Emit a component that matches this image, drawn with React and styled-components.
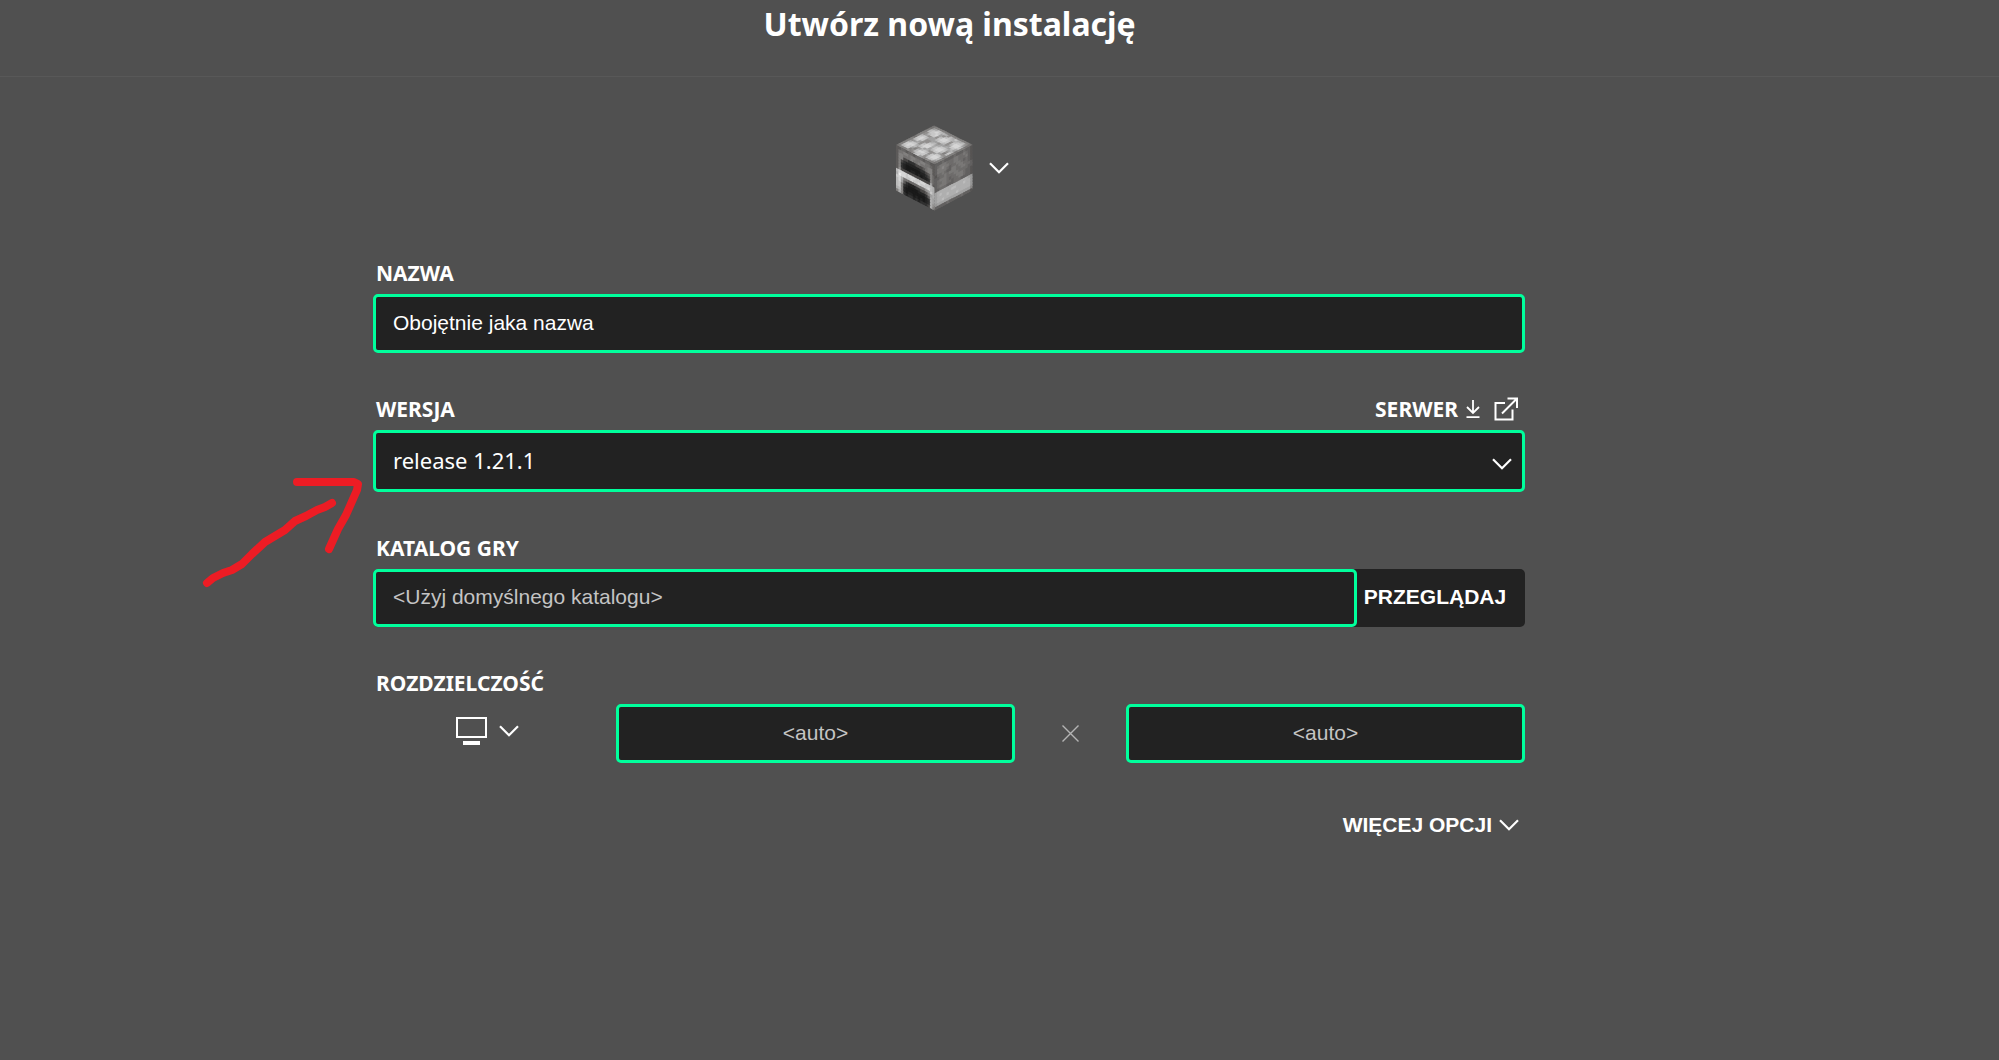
import React from "react";
import styled, { createGlobalStyle } from "styled-components";

const sans = '"Noto Sans", "Open Sans", sans-serif';
const arial = '"Liberation Sans", Arial, sans-serif';
const green = "#00ff9c";
const panel = "#222222";

const GlobalStyle = createGlobalStyle`
  *, *::before, *::after { box-sizing: border-box; }
  body {
    margin: 0;
    background: #505050;
    color: #ffffff;
    font-family: ${sans};
    font-size: 21px;
  }
  button, input, select { font: inherit; color: inherit; margin: 0; }
  button { background: none; border: 0; padding: 0; cursor: pointer; }
  svg { display: block; flex: none; }
`;

const Page = styled.div`
  position: relative;
  min-height: 100vh;
`;

const Header = styled.header`
  padding: 2px 100px 30px 0;
  border-bottom: 1px solid #585858;
  text-align: center;
`;

const Title = styled.h1`
  margin: 0;
  font-size: 32px;
  line-height: 44px;
  font-weight: 700;
`;

const Main = styled.main`
  padding: 48px 101px 48px 0;
`;

const Form = styled.form`
  max-width: 1152px;
  margin: 0 auto;
`;

const BlockButton = styled.button`
  display: flex;
  align-items: center;
  gap: 16px;
  margin: 0 auto 47px;
  padding-left: 6px;
`;

const Field = styled.div`
  margin-bottom: 41px;
`;

const LabelRow = styled.div`
  display: flex;
  justify-content: space-between;
  align-items: center;
  height: 30px;
  margin-bottom: 6px;
  padding: 0 7px 0 3px;
`;

const Label = styled.label`
  font-weight: 700;
  line-height: 30px;
`;

const Links = styled.div`
  display: flex;
  align-items: center;
  gap: 14px;
`;

const IconLink = styled.a`
  display: flex;
  align-items: center;
  gap: 8px;
  color: inherit;
  font-weight: 700;
  line-height: 30px;
  text-decoration: none;
`;

const TextInput = styled.input`
  display: block;
  flex: 1;
  width: 100%;
  min-width: 0;
  height: ${(p) => p.$height || 59}px;
  padding: 0 17px 2px;
  border: 3px solid ${green};
  border-radius: 5px;
  background: ${panel};
  font-family: ${arial};
  text-align: ${(p) => p.$align || "left"};
  outline: none;
  &::placeholder { color: #c4c4c4; opacity: 1; }
`;

const SelectBox = styled.div`
  position: relative;
`;

const Select = styled.select`
  display: block;
  width: 100%;
  height: 62px;
  padding: 0 56px 2px 17px;
  appearance: none;
  border: 3px solid ${green};
  border-radius: 5px;
  background: ${panel};
  font-size: 22px;
  outline: none;
`;

const SelectMark = styled.span`
  position: absolute;
  top: 28px;
  right: 13px;
  pointer-events: none;
`;

const Directory = styled.div`
  display: flex;
  border-radius: 5px;
  background: ${panel};
`;

const BrowseButton = styled.button`
  width: 168px;
  padding: 0 12px 2px 0;
  font-family: ${arial};
  font-weight: 700;
`;

const Resolution = styled.div`
  display: grid;
  grid-template-columns: 243px 1fr 111px 1fr;
  align-items: center;
`;

const MonitorButton = styled.button`
  display: flex;
  align-items: center;
  gap: 12px;
  padding: 0 0 6px 83px;
`;

const Times = styled.span`
  display: flex;
  justify-content: center;
`;

const MoreButton = styled.button`
  display: flex;
  align-items: center;
  gap: 7px;
  margin: 47px 6px 0 auto;
  font-family: ${arial};
  font-weight: 700;
  line-height: 30px;
`;

const Annotation = styled.svg`
  position: absolute;
  left: 200px;
  top: 470px;
  pointer-events: none;
`;

function Chevron() {
  return (
    <svg width="20" height="12" viewBox="0 0 20 12" fill="none" stroke="#fff" strokeWidth="2.200" aria-hidden="true">
      <path d="M1 1.2 10 10.2 19 1.2" />
    </svg>
  );
}

const front = [
  "4455455455545544",
  "4667767766776654",
  "4776667667666774",
  "4773322233346774",
  "4732111111223475",
  "4721000000112375",
  "4721001101011275",
  "4833333333333394",
  "bdddcdddccddccba",
  "aeddccdccdcccdba",
  "cda66555566689ca",
  "bd9421112233479a",
  "bc721000011124a9",
  "bc710000000012a9",
  "ab710110101012a8",
  "7a721221212223a7",
];

const side = [
  "5556555565556554",
  "5677766677667654",
  "5778776677666754",
  "5777765667765654",
  "4667655776776654",
  "5566767776677665",
  "5677766677666655",
  "5667765667776554",
  "5677766566776554",
  "5566655566655554",
  "abbbbbbbbbbbbba9",
  "abcbbbbccbbbcbb9",
  "abbbbcbbbbbbbbb9",
  "abbcbbbbbcbbbbb9",
  "9aaaaaaaaaaaaaa8",
  "5555565555565554",
];

const top = [
  "6777777677777766",
  "7bcca8bccb88bb97",
  "7cddc9cddc9bcca7",
  "7ccdca9ccb8ccdc7",
  "879ba888899cdcb7",
  "7878bcb8899899b7",
  "8bb9cddca9bcb8a7",
  "bcdb9ddcb9cddb87",
  "ccdca9aa98cddcb7",
  "9ccb8bcca9bccba7",
  "88988cddc9888ac7",
  "7bcc9cddca9bcba7",
  "8cddc9bcb9cddca7",
  "7cddc8789bcddcb7",
  "79bb98bcb9acb987",
  "6777677776777666",
];

const tones = {
  0: "#1a1a1a", 1: "#232323", 2: "#303030", 3: "#484645", 4: "#5c5a59",
  5: "#696766", 6: "#757372", 7: "#82807f", 8: "#92908f", 9: "#a0a0a0",
  a: "#adadad", b: "#bababa", c: "#c8c8c8", d: "#d6d6d6", e: "#ececec",
};

function Face({ rows, matrix, shade = 0 }) {
  return (
    <g transform={`matrix(${matrix})`}>
      {rows.flatMap((row, y) =>
        [...row].map((tone, x) => (
          <rect
            key={`${x}-${y}`}
            x={x}
            y={y}
            width={x < 15 ? 1.4 : 1}
            height={y < 15 ? 1.4 : 1}
            fill={tones[tone]}
          />
        ))
      )}
      {shade > 0 && <rect width="16" height="16" fill="#000" opacity={shade} />}
    </g>
  );
}

function Furnace() {
  return (
    <svg width="78" height="86" viewBox="0 0 78 86" role="img" aria-label="Piec">
      <Face rows={top} matrix="2.38 -1.22 2.42 1.22 1 20" />
      <Face rows={front} matrix="2.42 1.25 0 2.85 1 20" />
      <Face rows={side} matrix="2.36 -1.24 0 2.85 39.7 39.8" shade={0.06} />
    </svg>
  );
}

export default function App() {
  return (
    <Page>
      <GlobalStyle />
      <Header>
        <Title>Utwórz nową instalację</Title>
      </Header>
      <Main>
        <Form onSubmit={(e) => e.preventDefault()}>
          <BlockButton type="button">
            <Furnace />
            <Chevron />
          </BlockButton>

          <Field>
            <LabelRow>
              <Label htmlFor="name">NAZWA</Label>
            </LabelRow>
            <TextInput id="name" defaultValue="Obojętnie jaka nazwa" />
          </Field>

          <Field>
            <LabelRow>
              <Label htmlFor="version">WERSJA</Label>
              <Links>
                <IconLink href="#server">
                  SERWER
                  <svg width="14" height="20" viewBox="0 0 14 20" fill="none" stroke="#fff" strokeWidth="1.8" aria-hidden="true">
                    <path d="M7 1v12.5M1 8l6 6 6-6M.5 18.2h13" />
                  </svg>
                </IconLink>
                <IconLink href="#details" aria-label="Szczegóły">
                  <svg width="24" height="24" viewBox="0 0 24 24" fill="none" stroke="#fff" strokeWidth="2" aria-hidden="true">
                    <path d="M11 6H1.500V22.500H18.500V12.500M8 16.500 22.500 2M13.500 1.500H23V11" />
                  </svg>
                </IconLink>
              </Links>
            </LabelRow>
            <SelectBox>
              <Select id="version" defaultValue="1.21.1">
                <option value="1.21.1">release 1.21.1</option>
              </Select>
              <SelectMark>
                <Chevron />
              </SelectMark>
            </SelectBox>
          </Field>

          <Field>
            <LabelRow>
              <Label htmlFor="directory">KATALOG GRY</Label>
            </LabelRow>
            <Directory>
              <TextInput id="directory" placeholder="<Użyj domyślnego katalogu>" $height={58} />
              <BrowseButton type="button">PRZEGLĄDAJ</BrowseButton>
            </Directory>
          </Field>

          <LabelRow>
            <Label htmlFor="width">ROZDZIELCZOŚĆ</Label>
          </LabelRow>
          <Resolution>
            <MonitorButton type="button" aria-label="Wybierz rozdzielczość">
              <svg width="31" height="28" viewBox="0 0 31 28" aria-hidden="true">
                <rect x="1" y="1" width="29" height="19" fill="none" stroke="#fff" strokeWidth="2" />
                <rect x="7" y="24" width="17" height="4" fill="#fff" />
              </svg>
              <Chevron />
            </MonitorButton>
            <TextInput id="width" placeholder="<auto>" $align="center" />
            <Times>
              <svg width="17" height="17" viewBox="0 0 17 17" stroke="#b4b4b4" strokeWidth="1.4" aria-hidden="true">
                <path d="M.5.5l16 16M16.500.5l-16 16" />
              </svg>
            </Times>
            <TextInput aria-label="Wysokość" placeholder="<auto>" $align="center" />
          </Resolution>

          <MoreButton type="button">
            WIĘCEJ OPCJI
            <Chevron />
          </MoreButton>
        </Form>
      </Main>

      <Annotation width="170" height="125" viewBox="200 470 170 125" fill="none" stroke="#ed1c24" strokeWidth="8" strokeLinecap="round" strokeLinejoin="round" aria-hidden="true">
        <path d="M207 583 213 578 223 573 232 570 242 564 252 554 265 542 285 530 295 521 306 516 317 510 325 507 332 503" />
        <path d="M297 482H354L358 484 357 490 346 515 338 529 329 549" />
      </Annotation>
    </Page>
  );
}
